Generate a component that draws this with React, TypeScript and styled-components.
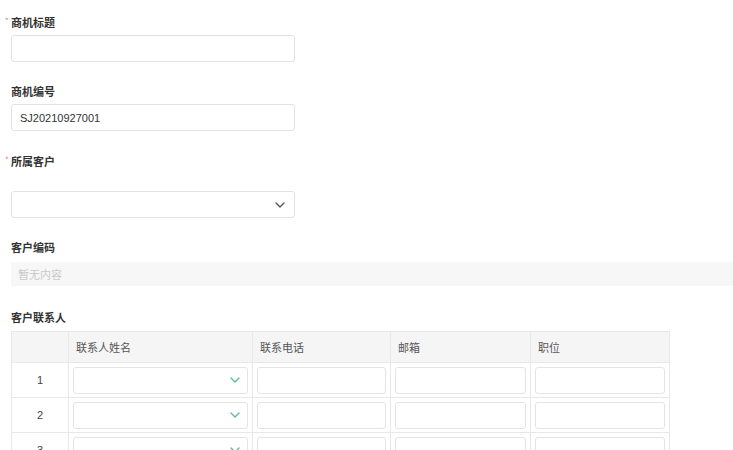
import styled, { createGlobalStyle } from 'styled-components';

const GlobalStyle = createGlobalStyle`
  html, body {
    margin: 0;
    padding: 0;
    background: #fff;
  }
  body {
    font-family: "Noto Sans CJK SC", "Liberation Sans", sans-serif;
    color: #333;
  }
`;

const Page = styled.div`
  width: 733px;
  height: 450px;
  overflow: hidden;
  padding: 15px 0 0 11px;
  box-sizing: border-box;
`;

const FormItem = styled.div<{ $full?: boolean; $space?: number }>`
  margin-bottom: ${(p) => p.$space ?? 22}px;
  width: ${(p) => (p.$full ? '722px' : '284px')};
`;

const Label = styled.div<{ $gap?: number }>`
  position: relative;
  font-size: 11px;
  line-height: 14px;
  font-weight: 600;
  color: #333;
  margin-bottom: ${(p) => p.$gap ?? 6}px;
`;

const Required = styled.span`
  position: absolute;
  left: -6px;
  top: -1px;
  color: #e8737b;
  font-size: 8px;
  font-weight: 400;
`;

const Input = styled.div`
  height: 27px;
  border: 1px solid #e2e2e2;
  border-radius: 3px;
  box-sizing: border-box;
  background: #fff;
  display: flex;
  align-items: center;
  padding: 0 8px;
  font-size: 11px;
  color: #333;
  font-family: "Liberation Sans", "Noto Sans CJK SC", sans-serif;
`;

const SelectBox = styled(Input)`
  justify-content: flex-end;
  padding-right: 9px;
`;

const Disabled = styled.div`
  height: 24px;
  background: #f7f7f7;
  display: flex;
  align-items: center;
  padding: 0 7px;
  font-size: 11px;
  color: #c9c9c9;
`;

const Table = styled.table`
  border-collapse: collapse;
  table-layout: fixed;
  width: 658px;
  font-size: 11px;
`;

const Th = styled.th<{ $w: number }>`
  width: ${(p) => p.$w}px;
  height: 31px;
  box-sizing: border-box;
  background: #f5f5f5;
  border: 1px solid #e8e8e8;
  text-align: left;
  padding: 0 7px;
  font-weight: 400;
  color: #555;
`;

const Td = styled.td<{ $center?: boolean }>`
  height: 35px;
  box-sizing: border-box;
  border: 1px solid #e8e8e8;
  padding: 0 4px;
  text-align: ${(p) => (p.$center ? 'center' : 'left')};
  color: #444;
  font-family: "Liberation Sans", sans-serif;
`;

const CellInput = styled(Input)`
  height: 27px;
  border-color: #e4e4e4;
`;

const CellSelect = styled(CellInput)`
  justify-content: flex-end;
  padding-right: 7px;
`;

function Chevron({ color }: { color: string }) {
  return (
    <svg width="10" height="6" viewBox="0 0 10 6">
      <path d="M1 1l4 4 4-4" fill="none" stroke={color} strokeWidth="1.4" strokeLinecap="round" strokeLinejoin="round" />
    </svg>
  );
}

const columns = [
  { title: '', w: 57 },
  { title: '联系人姓名', w: 184 },
  { title: '联系电话', w: 138 },
  { title: '邮箱', w: 140 },
  { title: '职位', w: 139 },
];

export default function App() {
  return (
    <Page>
      <GlobalStyle />
      <FormItem>
        <Label><Required>*</Required>商机标题</Label>
        <Input />
      </FormItem>
      <FormItem $space={23}>
        <Label>商机编号</Label>
        <Input>SJ20210927001</Input>
      </FormItem>
      <FormItem>
        <Label $gap={23}><Required>*</Required>所属客户</Label>
        <SelectBox>
          <Chevron color="#555" />
        </SelectBox>
      </FormItem>
      <FormItem $full $space={24}>
        <Label $gap={8}>客户编码</Label>
        <Disabled>暂无内容</Disabled>
      </FormItem>
      <FormItem $full>
        <Label $gap={7}>客户联系人</Label>
        <Table>
          <thead>
            <tr>
              {columns.map((c, i) => (
                <Th key={i} $w={c.w}>{c.title}</Th>
              ))}
            </tr>
          </thead>
          <tbody>
            {[1, 2, 3].map((n) => (
              <tr key={n}>
                <Td $center>{n}</Td>
                <Td>
                  <CellSelect>
                    <Chevron color="#5fb8a8" />
                  </CellSelect>
                </Td>
                <Td><CellInput /></Td>
                <Td><CellInput /></Td>
                <Td><CellInput /></Td>
              </tr>
            ))}
          </tbody>
        </Table>
      </FormItem>
    </Page>
  );
}
